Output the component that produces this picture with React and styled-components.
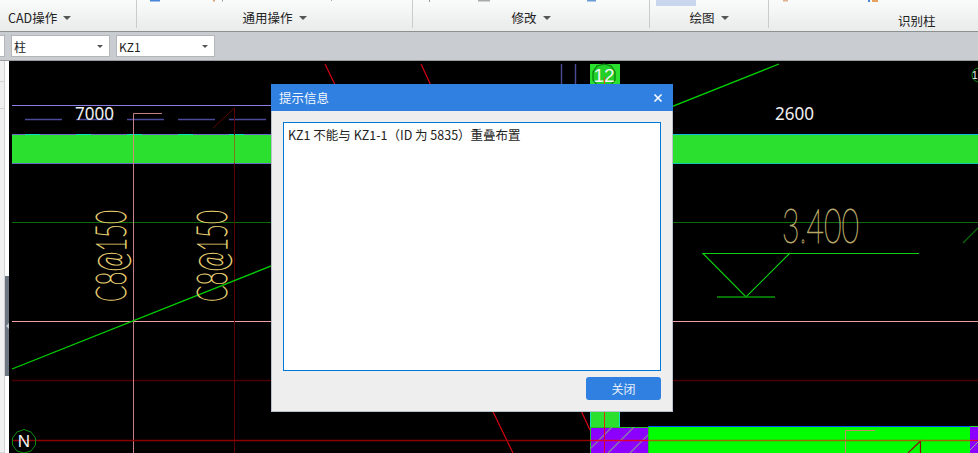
import React from "react";
import styled, { createGlobalStyle } from "styled-components";

const GlobalStyle = createGlobalStyle`
  html, body {
    margin: 0;
    padding: 0;
    background: #000;
    overflow: hidden;
  }
  * {
    box-sizing: border-box;
  }
`;

const FONT = `"Noto Sans CJK SC", "Liberation Sans", sans-serif`;

const groups = [
  { label: "CAD操作", width: 137, align: "flex-start", left: 8, top: 7, arrow: true },
  { label: "通用操作", width: 276, align: "center", left: 0, top: 7, arrow: true },
  { label: "修改", width: 237, align: "center", left: 0, top: 7, arrow: true },
  { label: "绘图", width: 119, align: "center", left: 0, top: 7, arrow: true },
  { label: "识别柱", width: 209, align: "flex-start", left: 129, top: 12, last: true },
];

const hatch = [];
for (let i = 0; i < 5; i++) {
  hatch.push(<line key={i} x1={586 + i * 22} y1="453" x2={612 + i * 22} y2="427" />);
}

const App = () => {
  return (
    <Page>
      <GlobalStyle />
      <Ribbon>
        <RibbonScraps viewBox="0 0 978 8" width="978" height="8">
          <rect x="150" y="0" width="10" height="1.5" fill="#4a86d8" />
          <rect x="213" y="0" width="2" height="1.5" fill="#d8a070" />
          <rect x="222" y="0" width="1" height="1.5" fill="#999" />
          <rect x="331" y="0" width="1" height="1" fill="#aaa" />
          <rect x="429" y="0" width="1" height="2" fill="#999" />
          <rect x="478" y="0" width="12" height="1.5" fill="#aaa" />
          <rect x="587" y="0" width="9" height="1.5" fill="#6a9ad8" />
          <rect x="656" y="0" width="40" height="6" fill="#c8d7ee" />
          <rect x="783" y="0" width="5" height="1.5" fill="#e0b090" />
          <rect x="868" y="0" width="2" height="2" fill="#4a86d8" />
          <rect x="872" y="0" width="6" height="2" fill="#e8a060" />
        </RibbonScraps>
        {groups.map((g) => (
          <RibbonGroup
            key={g.label}
            $width={g.width}
            $align={g.align}
            $left={g.left}
            $top={g.top}
            $last={g.last}
          >
            {g.label}
            {g.arrow && <Caret />}
          </RibbonGroup>
        ))}
      </Ribbon>

      <Toolbar>
        <CutSelect />
        <Select>
          柱<SmallCaret />
        </Select>
        <Select>
          KZ1
          <SmallCaret />
        </Select>
      </Toolbar>

      <Workspace>
        <Sidebar>
          <SideTabs>
            <SideTab $h={21} />
            <SideTab $h={27} />
            <SideTab $h={344} />
          </SideTabs>
          <SideGutter>
            <Handle>
              <HandleArrow />
            </Handle>
          </SideGutter>
        </Sidebar>

        <Canvas viewBox="9 61 969 392" width="969" height="392">
          <defs>
            <clipPath id="slabClip">
              <rect x="590" y="427" width="58" height="26" />
            </clipPath>
          </defs>

          {/* beams */}
          <rect x="12" y="134" width="966" height="30" fill="#2be02f" />
          <line x1="12" y1="134.5" x2="271" y2="134.5" stroke="#6a6ac8" />
          <line x1="12" y1="163.5" x2="271" y2="163.5" stroke="#6a6ac8" />
          <line x1="673" y1="134.5" x2="978" y2="134.5" stroke="#12b8d8" />
          <line x1="673" y1="163.5" x2="978" y2="163.5" stroke="#12c8b0" />
          <g stroke="#10d8c0">
            {[25, 76, 127, 178, 229].map((x) => (
              <line key={x} x1={x} y1="134.5" x2={x + 15} y2="134.5" />
            ))}
          </g>

          {/* dimension line */}
          <line x1="12" y1="105.5" x2="271" y2="105.5" stroke="#8a7fe0" />
          <g stroke="#4a4a98" strokeWidth="1.4">
            {[25, 76, 127, 178, 229].map((x) => (
              <line key={x} x1={x} y1="119.5" x2={x + 37} y2="119.5" />
            ))}
            <line x1="561.5" y1="64" x2="561.5" y2="84" />
            <line x1="575.5" y1="64" x2="575.5" y2="84" />
          </g>
          <DimText x="75" y="120" textLength="39" lengthAdjust="spacingAndGlyphs">7000</DimText>
          <DimText x="775" y="120" textLength="39" lengthAdjust="spacingAndGlyphs">2600</DimText>

          {/* axes */}
          <line x1="12" y1="222.5" x2="978" y2="222.5" stroke="#0c6c0c" />
          <line x1="12" y1="321.5" x2="978" y2="321.5" stroke="#f0a0a0" />
          <line x1="12" y1="380.5" x2="978" y2="380.5" stroke="#480000" strokeWidth="1.3" />
          <polyline points="162,113.5 133.5,113.5 133.5,453" fill="none" stroke="#c87e84" />
          <polyline points="213,128 234.5,108 234.5,453" fill="none" stroke="#5c0404" />
          <line x1="234.5" y1="135" x2="234.5" y2="163" stroke="#7a7a18" />
          <line x1="133.5" y1="135" x2="133.5" y2="163" stroke="#d09070" />
          <line x1="12" y1="369" x2="779" y2="64" stroke="#00d000" strokeWidth="1.3" />
          <line x1="325" y1="64" x2="513" y2="453" stroke="#d80010" strokeWidth="1.2" />
          <line x1="421" y1="64" x2="590" y2="430" stroke="#d80010" strokeWidth="1.2" />
          <line x1="963" y1="243" x2="978" y2="228" stroke="#0a6a0a" strokeWidth="1.2" />

          {/* elevation mark */}
          <polyline
            points="919,253.5 703,253.5 746,297 790,253"
            fill="none"
            stroke="#10d010"
            strokeWidth="1.2"
          />
          <line x1="717" y1="297" x2="775" y2="297" stroke="#089808" strokeWidth="1.6" />
          <ThinText x="782" y="243" fontSize="47" textLength="77" lengthAdjust="spacingAndGlyphs" $color="#b8a868">
            3.400
          </ThinText>

          {/* rebar labels */}
          <g transform="translate(126 302) rotate(-90)">
            <ThinText x="0" y="0" fontSize="41" textLength="92" lengthAdjust="spacingAndGlyphs" $color="#e6ce70">
              C8@150
            </ThinText>
          </g>
          <g transform="translate(227 302) rotate(-90)">
            <ThinText x="0" y="0" fontSize="41" textLength="92" lengthAdjust="spacingAndGlyphs" $color="#e6ce70">
              C8@150
            </ThinText>
          </g>

          {/* axis bubble 12 */}
          <rect x="590" y="64" width="30" height="20" fill="#2be02f" />
          <polygon
            points="604,64 611,66 615,72 615,80 611,85 597,85 593,80 593,72 597,66"
            fill="#22d028"
            stroke="#0a7a0c"
            strokeWidth="1.2"
          />
          <AxisText x="604" y="82" fontSize="19" textAnchor="middle">12</AxisText>
          <line x1="604.5" y1="77" x2="604.5" y2="84" stroke="#e05010" />

          {/* column below dialog */}
          <rect x="590" y="412" width="30" height="15" fill="#2be02f" />
          <line x1="590.5" y1="412" x2="590.5" y2="427" stroke="#18d8c8" />
          <line x1="619.5" y1="412" x2="619.5" y2="427" stroke="#18d8c8" />
          <line x1="604.5" y1="412" x2="604.5" y2="427" stroke="#d83010" />

          {/* slabs */}
          <rect x="648" y="426" width="322" height="27" fill="#00ff00" />
          <line x1="648" y1="426.5" x2="970" y2="426.5" stroke="#0050ff" />
          <rect x="590.5" y="427.5" width="58" height="26" fill="#8b00ff" stroke="#20c020" />
          <g clipPath="url(#slabClip)" stroke="#8a8a9a" strokeWidth="1.2">{hatch}</g>
          <rect x="970" y="427" width="8" height="26" fill="#8b00ff" />
          <line x1="970" y1="426.5" x2="978" y2="426.5" stroke="#20e020" />
          <line x1="970" y1="450" x2="978" y2="442" stroke="#a0a0a0" />
          <polyline points="875,430.5 845.5,430.5 845.5,453" fill="none" stroke="#c88868" />
          <polyline points="908,453 920.5,441 920.5,453" fill="none" stroke="#8a1010" strokeWidth="1.2" />

          {/* bottom axis */}
          <line x1="12" y1="440.5" x2="590" y2="440.5" stroke="#8c0000" strokeWidth="1.4" />
          <line x1="590" y1="440.5" x2="648" y2="440.5" stroke="#e00030" strokeWidth="1.4" />
          <line x1="648" y1="440.5" x2="970" y2="440.5" stroke="#a06800" strokeWidth="1.4" />
          <line x1="970" y1="440.5" x2="978" y2="440.5" stroke="#e00030" strokeWidth="1.4" />
          <line x1="604.5" y1="427" x2="604.5" y2="453" stroke="#e00030" />

          {/* north mark */}
          <polygon
            points="24,429.5 31,432 35.5,438 35.5,445 31,451 24,453 17,451 12.5,445 12.5,438 17,432"
            fill="none"
            stroke="#0c8a0c"
          />
          <AxisText x="24" y="447" fontSize="17" textAnchor="middle">N</AxisText>

          {/* bubble at the right edge */}
          <circle cx="979" cy="75" r="7" fill="none" stroke="#0c8a0c" />
          <AxisText x="972" y="79" fontSize="10">1</AxisText>
        </Canvas>
      </Workspace>

      <Dialog>
        <DialogHeader>
          提示信息
          <CloseIcon viewBox="0 0 10 10">
            <path d="M1.5 1.5 L8.5 8.5 M8.5 1.5 L1.5 8.5" />
          </CloseIcon>
        </DialogHeader>
        <DialogBody>
          <MessageBox>KZ1 不能与 KZ1-1（ID 为 5835）重叠布置</MessageBox>
          <DialogFooter>
            <CloseButton>关闭</CloseButton>
          </DialogFooter>
        </DialogBody>
      </Dialog>
    </Page>
  );
};

const Page = styled.div`
  position: relative;
  width: 978px;
  height: 453px;
  display: flex;
  flex-direction: column;
  overflow: hidden;
  font-family: ${FONT};
  background: #000;
`;

const Ribbon = styled.div`
  position: relative;
  display: flex;
  flex: none;
  height: 32px;
  padding-bottom: 3px;
  background: linear-gradient(#fafbfb, #e9ebeb);
  border-bottom: 1px solid #8d9090;
`;

const RibbonScraps = styled.svg`
  position: absolute;
  left: 0;
  top: 0;
`;

const RibbonGroup = styled.div`
  width: ${(p) => p.$width}px;
  display: flex;
  align-items: center;
  justify-content: ${(p) => p.$align};
  padding: ${(p) => p.$top}px 0 0 ${(p) => p.$left}px;
  font-size: 12.5px;
  color: #222;
  border-right: ${(p) => (p.$last ? "none" : "1px solid #c9cccc")};
`;

const Caret = styled.span`
  display: inline-block;
  margin-left: 6px;
  border-left: 4px solid transparent;
  border-right: 4px solid transparent;
  border-top: 4px solid #555;
`;

const Toolbar = styled.div`
  display: flex;
  flex: none;
  align-items: center;
  gap: 6px;
  height: 29px;
  background: #c9ccd0;
  border-bottom: 1px solid #9a9c9f;
`;

const CutSelect = styled.div`
  width: 5px;
  height: 22px;
  background: #fff;
  border: 1px solid #b4b6b8;
  border-left: none;
`;

const Select = styled.div`
  position: relative;
  display: flex;
  align-items: center;
  width: 99px;
  height: 22px;
  padding-left: 2px;
  font-size: 12px;
  color: #222;
  background: #fff;
  border: 1px solid #b4b6b8;
`;

const SmallCaret = styled.span`
  position: absolute;
  right: 6px;
  top: 9px;
  border-left: 3px solid transparent;
  border-right: 3px solid transparent;
  border-top: 3px solid #555;
`;

const Workspace = styled.div`
  display: flex;
  flex: 1;
  min-height: 0;
`;

const Sidebar = styled.div`
  display: flex;
  flex: none;
  width: 9px;
  background: #fff;
`;

const SideTabs = styled.div`
  width: 5px;
  display: flex;
  flex-direction: column;
  border-right: 1px solid #cfd1d4;
`;

const SideTab = styled.div`
  height: ${(p) => p.$h}px;
  background: #f0f0f0;
  border-bottom: 1px solid #d4d4d4;
`;

const SideGutter = styled.div`
  flex: 1;
  padding-top: 215px;
`;

const Handle = styled.div`
  display: flex;
  align-items: center;
  justify-content: center;
  height: 100px;
  background: #6b7680;
`;

const HandleArrow = styled.span`
  border-top: 3px solid transparent;
  border-bottom: 3px solid transparent;
  border-right: 3px solid #c8ccd0;
`;

const Canvas = styled.svg`
  display: block;
  flex: none;
  background: #000;
`;

const DimText = styled.text`
  font-family: "Noto Sans", "Liberation Sans", sans-serif;
  font-size: 18px;
  fill: #f0f0f0;
`;

const ThinText = styled.text`
  font-family: "Lato", "Liberation Sans", sans-serif;
  font-weight: 100;
  fill: none;
  stroke: ${(p) => p.$color};
  stroke-width: 1;
`;

const AxisText = styled.text`
  font-family: "Liberation Sans", sans-serif;
  fill: #f4f4f4;
`;

const Dialog = styled.div`
  position: absolute;
  left: 271px;
  top: 84px;
  width: 402px;
  height: 328px;
  display: flex;
  flex-direction: column;
  background: #eeeeee;
  border: 1px solid #b9c2cc;
  border-top: none;
`;

const DialogHeader = styled.div`
  display: flex;
  flex: none;
  align-items: center;
  justify-content: space-between;
  height: 27px;
  margin: 0 -1px;
  padding: 0 10px 0 8px;
  font-size: 12.5px;
  color: #f2f6fc;
  background: #2f80e0;
`;

const CloseIcon = styled.svg`
  width: 10px;
  height: 10px;
  fill: none;
  stroke: #fff;
  stroke-width: 1.6;
`;

const DialogBody = styled.div`
  flex: 1;
  display: flex;
  flex-direction: column;
  padding: 11px;
`;

const MessageBox = styled.div`
  flex: none;
  height: 249px;
  padding: 3px 4px;
  font-size: 12.5px;
  line-height: 17px;
  color: #222;
  background: #fff;
  border: 1px solid #0078d7;
`;

const DialogFooter = styled.div`
  display: flex;
  justify-content: flex-end;
  margin-top: 6px;
`;

const CloseButton = styled.div`
  display: flex;
  align-items: center;
  justify-content: center;
  width: 75px;
  height: 23px;
  font-size: 12px;
  color: #e8f0fa;
  background: #3080e2;
  border-radius: 3px;
`;

export default App;
